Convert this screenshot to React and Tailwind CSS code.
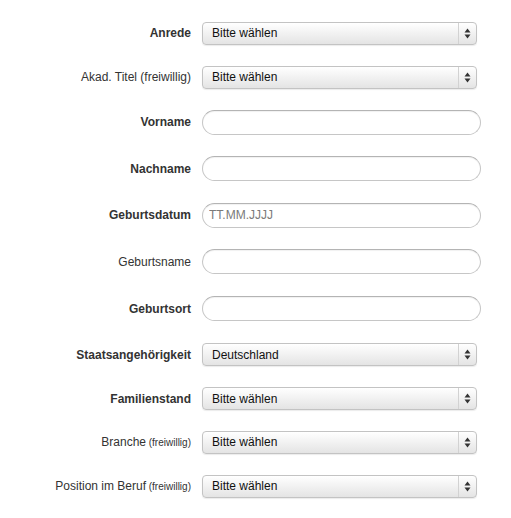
const rows = [
  { label: "Anrede", bold: true, type: "select", value: "Bitte wählen", h: "h-[44px]" },
  { label: "Akad. Titel (freiwillig)", type: "select", value: "Bitte wählen", h: "h-[44px]" },
  { label: "Vorname", bold: true, type: "input", h: "h-[46px]" },
  { label: "Nachname", bold: true, type: "input", h: "h-[47px]" },
  { label: "Geburtsdatum", bold: true, type: "input", placeholder: "TT.MM.JJJJ", h: "h-[46px]" },
  { label: "Geburtsname", type: "input", h: "h-[47px]" },
  { label: "Geburtsort", bold: true, type: "input", h: "h-[47px]" },
  { label: "Staatsangehörigkeit", bold: true, type: "select", value: "Deutschland", h: "h-[45px]" },
  { label: "Familienstand", bold: true, type: "select", value: "Bitte wählen", h: "h-[43px]" },
  { label: "Branche", small: "(freiwillig)", type: "select", value: "Bitte wählen", h: "h-[44px]" },
  { label: "Position im Beruf", small: "(freiwillig)", type: "select", value: "Bitte wählen", h: "h-[44px]" },
];

function Select({ value }) {
  return (
    <div className="flex h-[23px] w-[275px] items-center rounded-[4px] border border-[#c3c3c3] bg-gradient-to-b from-[#ffffff] to-[#e4e4e4] shadow-[0_1px_1px_rgba(0,0,0,0.08)]">
      <span className="flex-1 pl-[9px] text-[12px] text-[#111]">{value}</span>
      <div className="flex h-full w-[18px] items-center justify-center border-l border-[#d2d2d2]">
        <svg width="7" height="11" viewBox="0 0 7 11">
          <path d="M3.5 0.5 L6.5 4.5 L0.5 4.5 Z" fill="#333" />
          <path d="M3.5 10.5 L6.5 6.5 L0.5 6.5 Z" fill="#333" />
        </svg>
      </div>
    </div>
  );
}

function Input({ placeholder }) {
  return (
    <input
      className="h-[25px] w-[279px] rounded-full border border-[#c6c6c6] border-t-[#b4b4b4] bg-white px-[6px] text-[12px] text-[#333] shadow-[inset_0_1px_1px_rgba(0,0,0,0.06)] outline-none placeholder:text-[#7a7a7a]"
      placeholder={placeholder}
    />
  );
}

export default function App() {
  return (
    <div
      className="min-h-screen bg-white pt-[11px]"
      style={{ fontFamily: '"Liberation Sans", Arial, sans-serif' }}
    >
      {rows.map((r) => (
        <div key={r.label} className={`flex items-center ${r.h}`}>
          <div
            className={`w-[191px] text-right text-[12px] text-[#333] ${r.bold ? "font-bold" : ""}`}
          >
            {r.label}
            {r.small && <span className="text-[10px]"> {r.small}</span>}
          </div>
          <div className="ml-[11px]">
            {r.type === "select" ? <Select value={r.value} /> : <Input placeholder={r.placeholder} />}
          </div>
        </div>
      ))}
    </div>
  );
}
